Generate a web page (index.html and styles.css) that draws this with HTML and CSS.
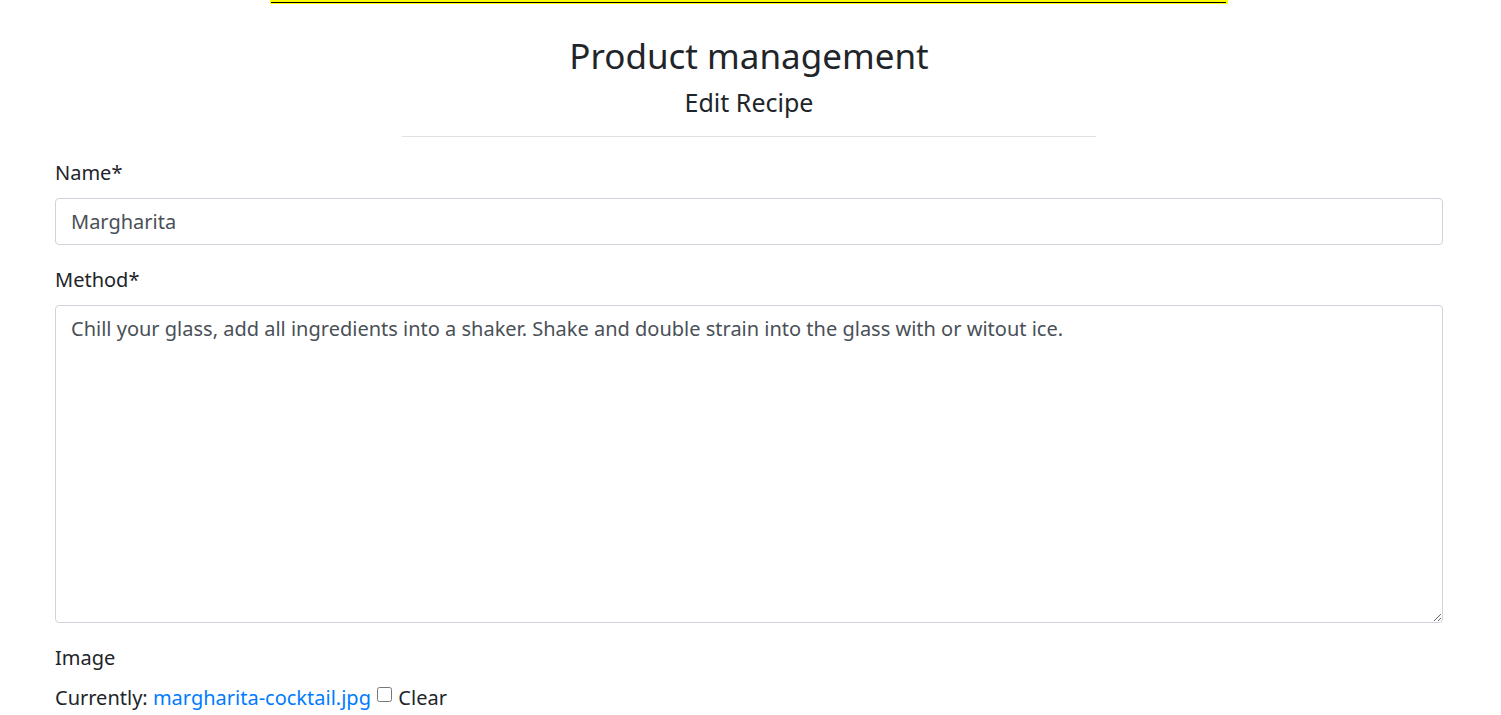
FILE: index.html
```html
<!DOCTYPE html>
<html lang="en">
<head>
<meta charset="utf-8">
<title>Edit Recipe</title>
<link rel="stylesheet" href="styles.css">
</head>
<body>
<div class="banner"><div class="banner-line"></div></div>
<main class="page">
  <header class="heading">
    <h2 class="title">Product management</h2>
    <h4 class="subtitle">Edit Recipe</h4>
    <hr class="rule">
  </header>
  <form class="form">
    <div class="field">
      <label class="label" for="name">Name*</label>
      <input class="control" id="name" type="text" value="Margharita">
    </div>
    <div class="field">
      <label class="label" for="method">Method*</label>
      <textarea class="control area" id="method">Chill your glass, add all ingredients into a shaker. Shake and double strain into the glass with or witout ice.</textarea>
    </div>
    <div class="field">
      <span class="label">Image</span>
      <div class="current">Currently: <a class="link" href="#">margharita-cocktail.jpg</a> <input type="checkbox" class="check" id="clear"> <label for="clear">Clear</label></div>
    </div>
  </form>
</main>
</body>
</html>
```

FILE: styles.css
```css
html {
  font-size: 20px;
}
html, body {
  margin: 0;
  padding: 0;
  background: #fff;
}
body {
  font-family: "Noto Sans", "DejaVu Sans", sans-serif;
  font-size: 1rem;
  line-height: 1.5;
  color: #212529;
}
.banner {
  width: 958px;
  height: 4px;
  margin: 0 auto 0 270px;
  background: #ffff00;
  box-sizing: border-box;
  padding: 2px 2px 1px 1px;
}
.banner-line {
  height: 1px;
  background: #000;
}
.page {
  padding: 0 58px 0 55px;
}
.heading {
  text-align: center;
}
.title {
  margin: 31px 0 10px;
  font-size: 1.75rem;
  font-weight: 400;
  line-height: 1.2;
}
.subtitle {
  margin: 0;
  font-size: 1.25rem;
  font-weight: 400;
  line-height: 1.2;
}
.rule {
  width: 50%;
  margin: 19px auto 21px;
  border: 0;
  border-top: 1px solid #dee2e6;
}
.form {
  margin: 0;
}
.field {
  margin-bottom: 20px;
}
.label {
  display: block;
  margin-bottom: 10px;
}
.control {
  display: block;
  width: 100%;
  box-sizing: border-box;
  height: 47px;
  padding: 7.5px 15px;
  font: inherit;
  color: #495057;
  background: #fff;
  border: 1px solid #ced4da;
  border-radius: 4px;
}
.area {
  height: 318px;
  resize: vertical;
}
.link {
  color: #007bff;
  text-decoration: none;
}
.check {
  width: 15px;
  height: 15px;
  margin: 0 1px;
  vertical-align: 3px;
}
```
